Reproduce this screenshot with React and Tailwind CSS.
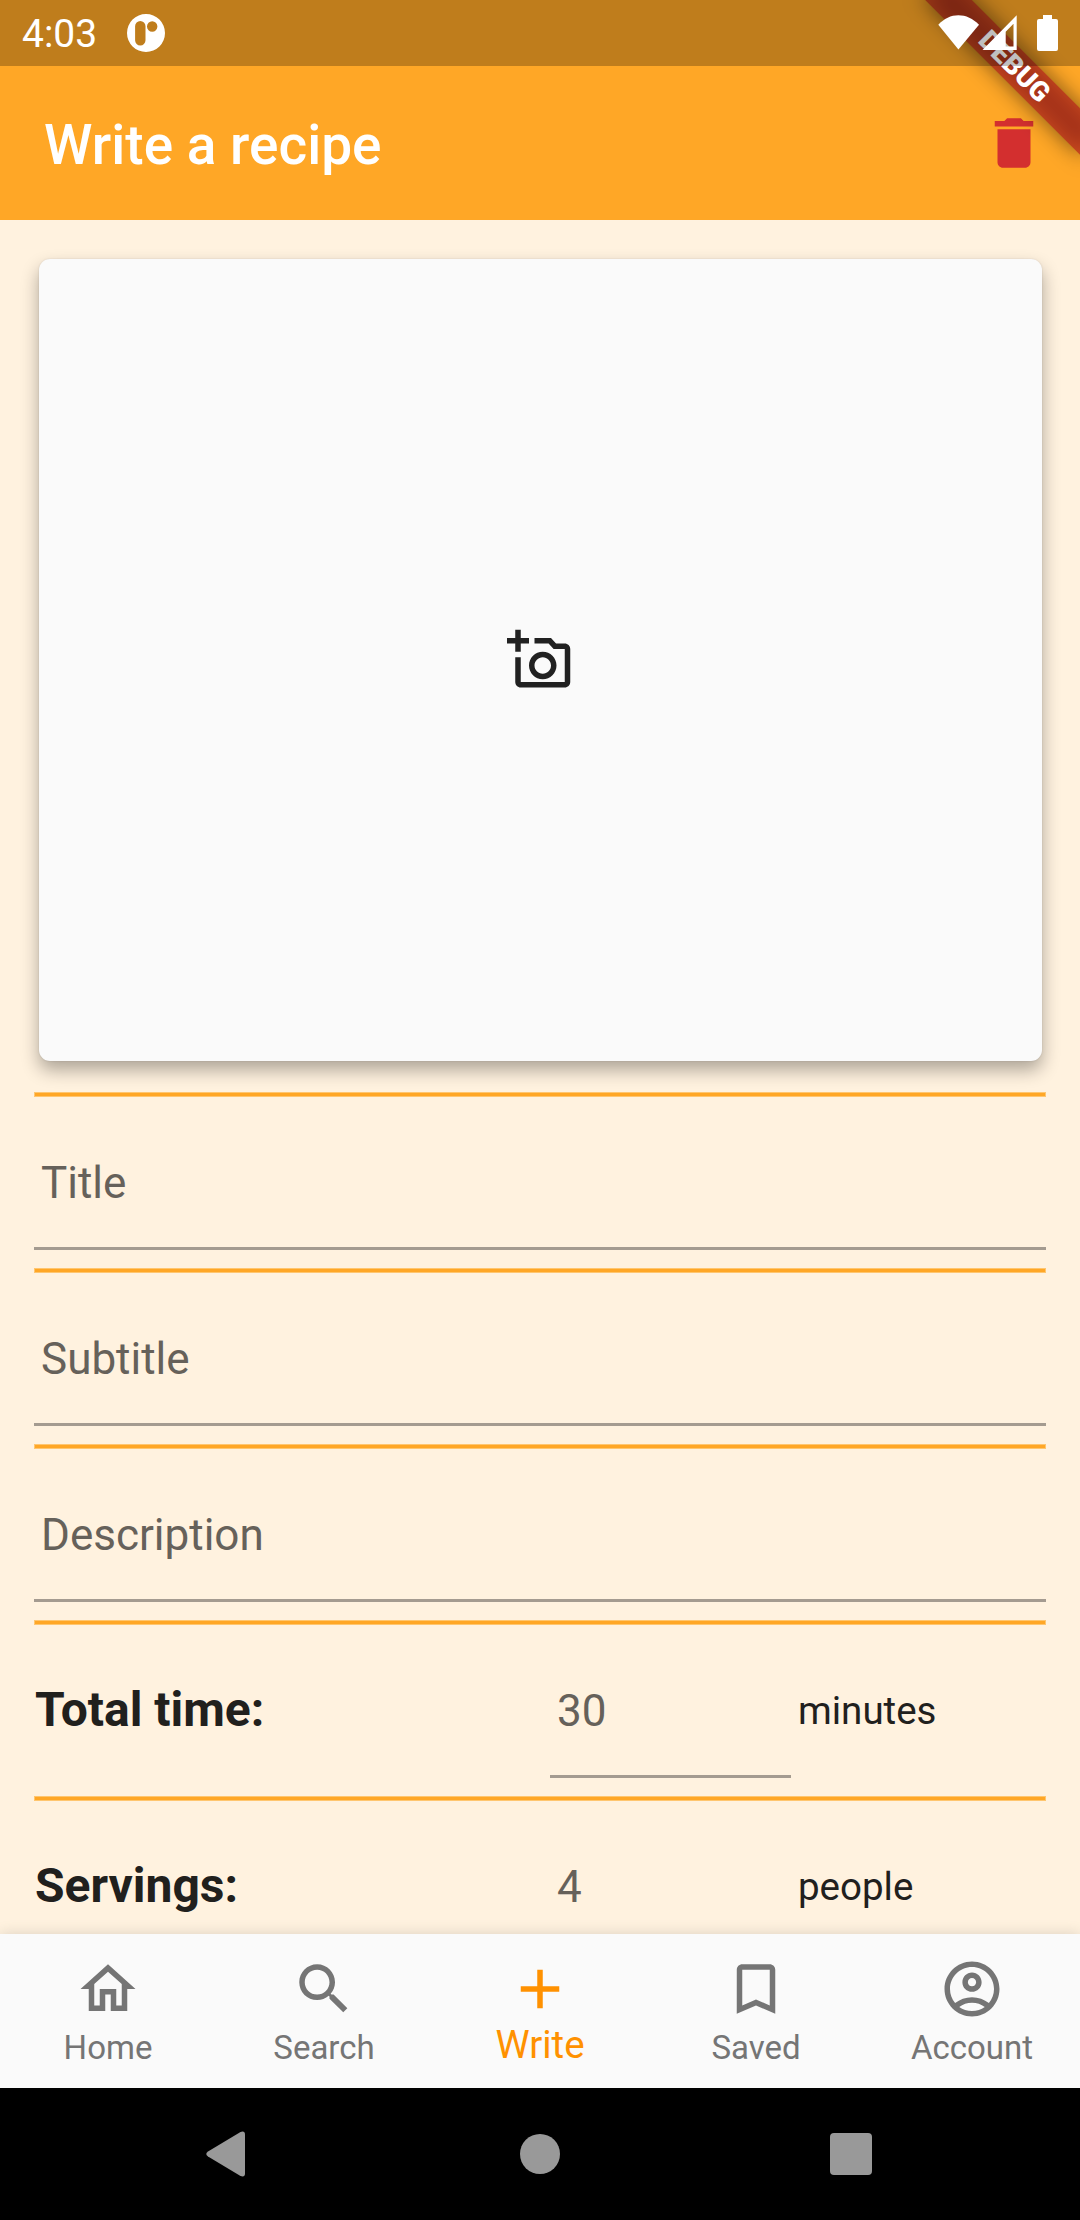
const icons = {
  home: "M12 5.69l5 4.5V18h-2v-6H9v6H7v-7.81l5-4.5M12 3L2 12h3v8h6v-6h2v6h6v-8h3L12 3z",
  search:
    "M15.5 14h-.79l-.28-.27C15.41 12.59 16 11.11 16 9.5 16 5.91 13.09 3 9.5 3S3 5.91 3 9.5 5.91 16 9.5 16c1.61 0 3.09-.59 4.23-1.57l.27.28v.79l5 4.99L20.49 19l-4.99-5zm-6 0C7.01 14 5 11.99 5 9.5S7.01 5 9.5 5 14 7.01 14 9.5 11.99 14 9.5 14z",
  add: "M19 13h-6v6h-2v-6H5v-2h6V5h2v6h6v2z",
  bookmark:
    "M17 3H7c-1.1 0-1.99.9-1.99 2L5 21l7-3 7 3V5c0-1.1-.9-2-2-2zm0 15l-5-2.18L7 18V5h10v13z",
  account:
    "M12 2C6.48 2 2 6.48 2 12s4.48 10 10 10 10-4.48 10-10S17.52 2 12 2zM7.35 18.5C8.66 17.56 10.26 17 12 17s3.34.56 4.65 1.5C15.34 19.44 13.74 20 12 20s-3.34-.56-4.65-1.5zm10.79-1.38C16.45 15.8 14.32 15 12 15s-4.45.8-6.14 2.12C4.7 15.73 4 13.95 4 12c0-4.42 3.58-8 8-8s8 3.58 8 8c0 1.95-.7 3.73-1.86 5.12zM12 6c-1.93 0-3.5 1.57-3.5 3.5S10.07 13 12 13s3.5-1.57 3.5-3.5S13.93 6 12 6zm0 5c-.83 0-1.5-.67-1.5-1.5S11.17 8 12 8s1.5.67 1.5 1.5S12.83 11 12 11z",
  trash:
    "M6 19c0 1.1.9 2 2 2h8c1.1 0 2-.9 2-2V7H6v12zM19 4h-3.5l-1-1h-5l-1 1H5v2h14V4z",
  camera:
    "M21 6h-3.17L16 4h-6v2h5.12l1.83 2H21v12H5v-9H3v9c0 1.1.9 2 2 2h16c1.1 0 2-.9 2-2V8c0-1.1-.9-2-2-2zM8 14c0 2.76 2.24 5 5 5s5-2.24 5-5-2.24-5-5-5-5 2.24-5 5zm5-3c1.65 0 3 1.35 3 3s-1.35 3-3 3-3-1.35-3-3 1.35-3 3-3zM5 6h3V4H5V1H3v3H0v2h3v3h2z",
};

function Icon({ name }) {
  return (
    <svg viewBox="0 0 24 24" className="size-[66px] shrink-0 fill-current">
      <path d={icons[name]} />
    </svg>
  );
}

function StatusBar() {
  return (
    <div className="relative z-20 flex h-[66px] shrink-0 items-start bg-black/25 text-white">
      <span className="ml-[22px] mt-3 w-[105px] text-[39px] leading-[45px]">4:03</span>
      <svg viewBox="0 0 38 38" className="mt-[14px] size-[38px]">
        <path
          fill="#fff"
          fillRule="evenodd"
          d="M19 0a19 19 0 1 1 0 38a19 19 0 1 1 0-38zM13.3 7a5.2 5.2 0 0 0-5.2 5.2v14a5.2 5.2 0 0 0 10.4 0v-14A5.2 5.2 0 0 0 13.3 7zM25.2 7.3a5.2 5.2 0 1 0 0 10.4a5.2 5.2 0 1 0 0-10.4z"
        />
      </svg>
      <svg viewBox="0 0 124 40" className="ml-auto mr-5 mt-[14px] h-10 w-[124px] fill-white">
        <path d="M2.3 10.7C8 4.500 15 1.200 22.400 1.200S37 4.500 43 10.700L22.400 35.400z" />
        <path fillRule="evenodd" d="M80.700 1.300V36H46.500zM77.500 9.700L69.700 17.700V32.400H77.500z" />
        <path d="M107 1h9v4h4a2 2 0 0 1 2 2v28a2 2 0 0 1-2 2h-17a2 2 0 0 1-2-2V7a2 2 0 0 1 2-2h4z" />
      </svg>
    </div>
  );
}

/* Ribbon laid diagonally across the top right corner, over the app bar */
function DebugBanner() {
  return (
    <div className="absolute left-[904px] top-[49px] z-10 h-[33px] w-[220px] rotate-45">
      <div className="absolute inset-0 bg-black/50 blur-[11px]" />
      <div className="relative flex h-full items-center justify-center bg-[#b71c1c]/63 pl-[2px] text-[27.5px] font-black leading-none text-white">
        DEBUG
      </div>
    </div>
  );
}

function Section({ children }) {
  return (
    <section className="h-44 shrink-0">
      <div className="h-[5px] border border-[#ffc66f] bg-[#ffa726]" />
      {children}
    </section>
  );
}

function Field({ hint }) {
  return (
    <div className="h-[153px] border-b-3 border-[#a49b90] pl-[7px] pt-[60px] text-[44px] leading-[52px] text-[#66615a]">
      {hint}
    </div>
  );
}

function AmountRow({ label, value, unit }) {
  return (
    <div className="grid grid-cols-[516px_241px_1fr] text-[#21201d]">
      <div className="pl-px pt-14 text-[48px] font-bold leading-[57px]">{label}</div>
      <Field hint={value} />
      <div className="pl-[7px] pt-[63px] text-[38.5px] leading-[45px]">{unit}</div>
    </div>
  );
}

const tabs = [
  { icon: "home", label: "Home" },
  { icon: "search", label: "Search" },
  { icon: "add", label: "Write", active: true },
  { icon: "bookmark", label: "Saved" },
  { icon: "account", label: "Account" },
];

export default function App() {
  return (
    <div className="relative flex h-[2220px] w-[1080px] flex-col overflow-hidden bg-[#fff2df] font-['Roboto',sans-serif]">
      <div className="relative flex h-[220px] shrink-0 flex-col overflow-hidden bg-[#ffa726]">
        <StatusBar />
        <header className="flex flex-1 items-center justify-between pl-11 pr-[33px]">
          <h1 className="pt-1 text-[55px] font-medium leading-[64px] text-white">Write a recipe</h1>
          <div className="text-[#d32f2f]">
            <Icon name="trash" />
          </div>
        </header>
        <DebugBanner />
      </div>

      <main className="flex min-h-0 flex-1 flex-col overflow-hidden px-[34px]">
        <div className="mx-[4.5px] mb-[31px] mt-[38.5px] flex h-[802.5px] shrink-0 items-center justify-center rounded-[11px] bg-[#fafafa] text-[#212121] shadow-[0_9px_18px_rgba(0,0,0,0.32),0_0_2px_rgba(0,0,0,0.12)]">
          <Icon name="camera" />
        </div>
        <Section>
          <Field hint="Title" />
        </Section>
        <Section>
          <Field hint="Subtitle" />
        </Section>
        <Section>
          <Field hint="Description" />
        </Section>
        <Section>
          <AmountRow label="Total time:" value="30" unit="minutes" />
        </Section>
        <Section>
          <AmountRow label="Servings:" value="4" unit="people" />
        </Section>
      </main>

      <nav className="z-10 grid h-[154px] shrink-0 grid-cols-5 bg-[#fafafa] shadow-[0_0_14px_rgba(0,0,0,0.14)]">
        {tabs.map((tab) => (
          <div
            key={tab.label}
            className={
              tab.active
                ? "flex flex-col items-center pt-[22px] text-[38.5px] leading-[45px] text-[#ff9100]"
                : "flex flex-col items-center gap-[6px] pt-[22px] text-[33px] leading-[39px] text-[#757575]"
            }
          >
            <Icon name={tab.icon} />
            <span>{tab.label}</span>
          </div>
        ))}
      </nav>

      <div className="z-20 flex h-[132px] shrink-0 items-center justify-between bg-black pl-[206px] pr-[208px]">
        <svg viewBox="0 0 39 46" className="h-[46px] w-[39px] fill-[#999]">
          <path d="M2 20.500L34.500 1Q39 -0.500 39 3.500V42.500Q39 46.500 34.500 45L2 25.500Q-1.500 23 2 20.500z" />
        </svg>
        <div className="ml-[67px] mr-[62px] size-10 rounded-full bg-[#999]" />
        <div className="size-[42px] rounded bg-[#999]" />
      </div>
    </div>
  );
}
